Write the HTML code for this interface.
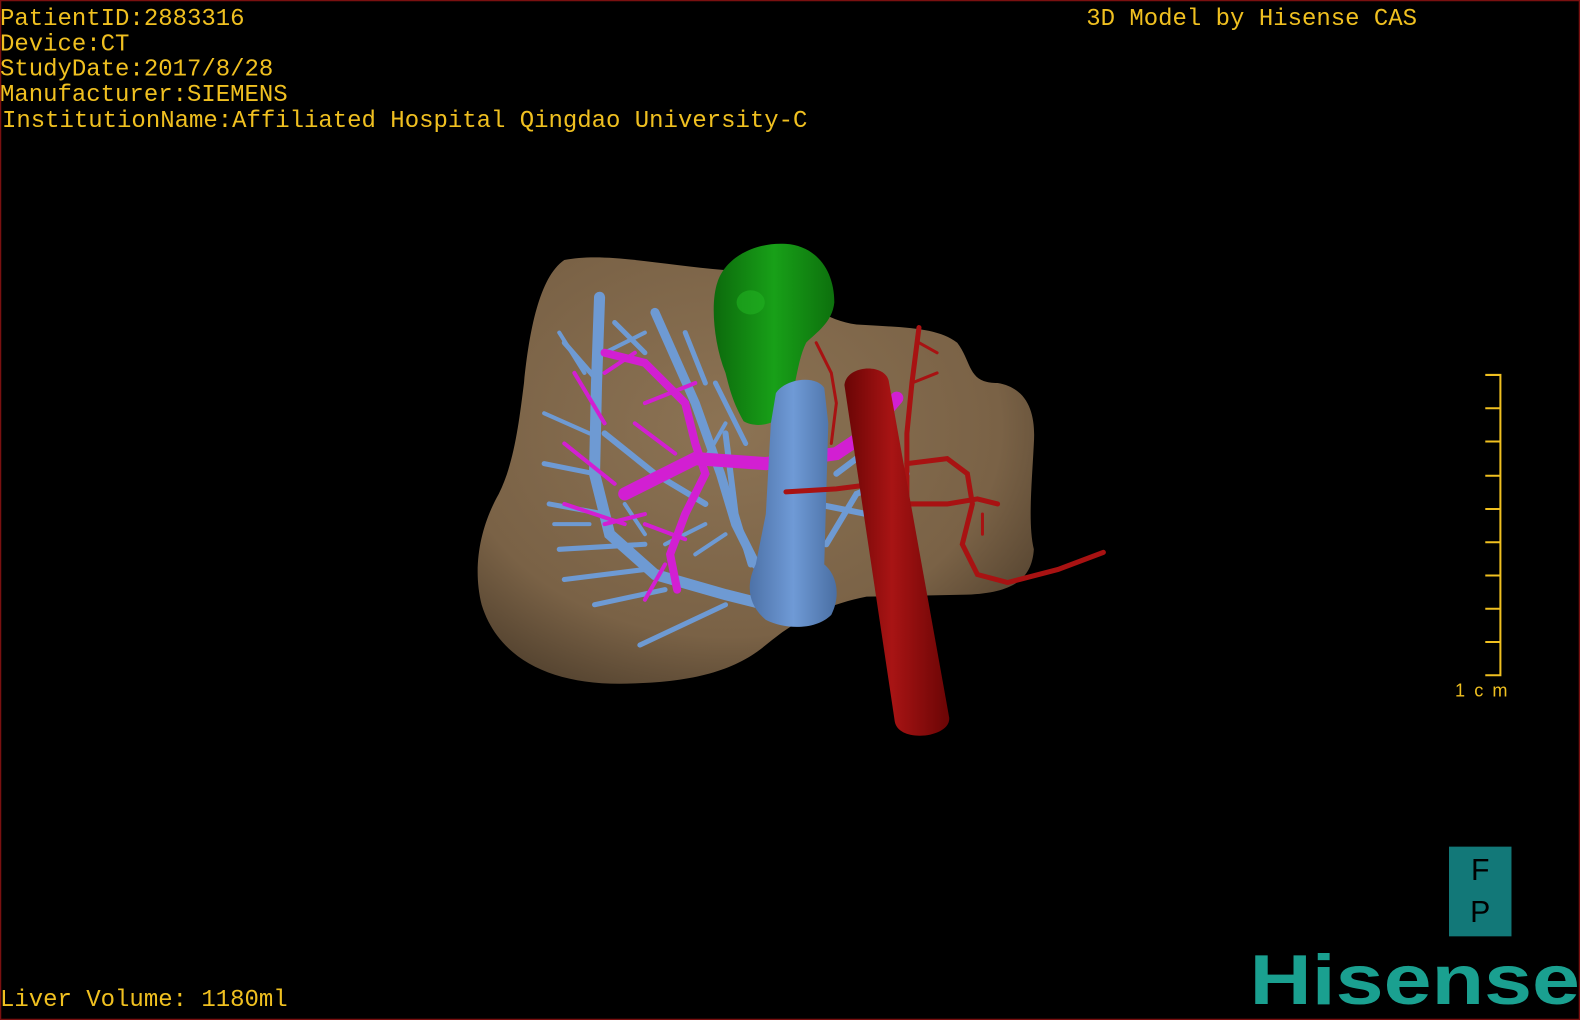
<!DOCTYPE html>
<html><head><meta charset="utf-8"><style>
html,body{margin:0;padding:0;background:#000;width:1580px;height:1020px;overflow:hidden}
svg{display:block}
</style></head><body>
<svg width="1580" height="1020" viewBox="0 0 1568 1012" preserveAspectRatio="none" xmlns="http://www.w3.org/2000/svg">
<defs>
<radialGradient id="lv" cx="0.45" cy="0.4" r="0.7">
<stop offset="0" stop-color="#8c7354"/><stop offset="0.7" stop-color="#7a6246"/><stop offset="1" stop-color="#4e3e2c"/>
</radialGradient>
<linearGradient id="gb" x1="0" y1="0" x2="1" y2="0"><stop offset="0" stop-color="#0c6a0c"/><stop offset="0.5" stop-color="#18a018"/><stop offset="1" stop-color="#0d700d"/></linearGradient>
<linearGradient id="ivc" x1="0" y1="0" x2="1" y2="0"><stop offset="0" stop-color="#4d72a8"/><stop offset="0.5" stop-color="#6f9ad6"/><stop offset="1" stop-color="#4a6fa3"/></linearGradient>
<linearGradient id="ao" x1="0" y1="0" x2="1" y2="0"><stop offset="0" stop-color="#6a0505"/><stop offset="0.45" stop-color="#a81414"/><stop offset="1" stop-color="#6a0505"/></linearGradient>
</defs>
<rect x="0.5" y="0.5" width="1567" height="1011" fill="#000" stroke="#7a1010" stroke-width="1.5"/>
<path d="M560,258 C600,250 650,262 720,268 L760,280 C800,300 820,318 850,322 C900,325 930,325 950,340 C965,360 960,380 990,380 C1020,385 1028,410 1026,440 C1024,480 1020,520 1026,545 C1024,575 1005,588 960,590 L860,592 C820,600 790,615 760,640 C730,665 690,676 630,678 C550,682 495,655 478,600 C468,560 478,520 495,490 C510,460 515,420 520,380 C525,330 535,275 560,258 Z" fill="url(#lv)"/>
<g stroke="#6e9ad3" fill="none" stroke-linecap="round">
<path d="M595,295 L592,380 L590,470 L605,530 L650,570 L720,590 L760,600" stroke-width="11"/>
<path d="M650,310 L690,400 L715,470 L730,520 L750,560" stroke-width="9"/>
<path d="M600,430 L650,470 L700,500" stroke-width="6"/>
<path d="M720,430 L730,510 L745,560" stroke-width="6"/>
<path d="M540,460 L590,470 M545,500 L600,510 M555,545 L640,540 M560,575 L640,565 M590,600 L660,585 M635,640 L720,600 M560,340 L595,380 M610,320 L640,350 M680,330 L700,380 M710,380 L740,440" stroke-width="5"/>
<path d="M820,540 L850,490 L900,470 M810,500 L860,510 M830,470 L870,440" stroke-width="6"/>
<path d="M555,330 L580,370 M540,410 L585,430 M600,350 L640,330 M550,520 L585,520 M620,500 L640,530 M660,540 L700,520 M690,550 L720,530 M700,455 L720,420" stroke-width="4"/>
</g>
<g stroke="#d21fd2" fill="none" stroke-linecap="round">
<path d="M600,350 L640,360 L680,400 L690,440 L700,470 L680,510 L665,550 L672,585" stroke-width="8"/>
<path d="M620,490 L690,455 L760,460 L830,450 L860,430 L890,395" stroke-width="13"/>
<path d="M570,370 L600,420 M560,440 L610,480 M560,500 L620,520 M600,520 L640,510 M640,520 L680,535 M640,400 L690,380 M600,370 L630,350 M630,420 L670,450 M640,595 L660,560" stroke-width="4"/>
</g>
<path d="M712,280 C720,255 750,240 780,242 C810,244 828,268 828,300 C826,320 810,330 800,340 C790,360 790,390 780,408 C770,422 750,425 738,418 C728,400 725,390 720,370 C708,340 705,300 712,280 Z" fill="url(#gb)"/>
<ellipse cx="745" cy="300" rx="14" ry="12" fill="#22b022" opacity="0.6"/>
<path d="M770,390 C780,375 810,372 818,385 L822,420 L818,560 C830,570 835,590 825,610 C810,625 780,625 760,615 C742,600 740,580 750,560 L760,510 L765,420 Z" fill="url(#ivc)"/>
<g stroke="#a81212" fill="none" stroke-linecap="round">
<path d="M780,488 L830,485 L870,480" stroke-width="5"/>
<path d="M810,340 L825,370 L830,400 L825,440" stroke-width="3"/>
<path d="M912,325 L905,380 L900,430 L900,500 L940,500 L970,495 L990,500" stroke-width="5"/>
<path d="M900,460 L940,455 L960,470 L965,500 L955,540 L970,570 L1000,578 L1050,565 L1095,548" stroke-width="5"/>
<path d="M912,340 L930,350 M905,380 L930,370 M975,510 L975,530" stroke-width="3"/>
</g>
<path d="M838,382 C840,362 878,360 882,378 L942,712 C944,732 892,738 888,716 Z" fill="url(#ao)"/>
<g font-family="'Liberation Mono', monospace" font-size="23.8" fill="#f0c020">
<text x="0" y="25">PatientID:2883316</text>
<text x="0" y="50">Device:CT</text>
<text x="0" y="75">StudyDate:2017/8/28</text>
<text x="0" y="100">Manufacturer:SIEMENS</text>
<text x="2" y="126">InstitutionName:Affiliated Hospital Qingdao University-C</text>
<text x="1078" y="25">3D Model by Hisense CAS</text>
<text x="0" y="998">Liver Volume: 1180ml</text>
</g>
<g stroke="#f0c020" stroke-width="2" fill="none">
<path d="M1474,372 H1489 V670 H1474"/>
<path d="M1474,405H1489M1474,438H1489M1474,472H1489M1474,505H1489M1474,538H1489M1474,571H1489M1474,604H1489M1474,637H1489"/>
</g>
<text x="1444" y="691" font-family="'Liberation Sans', sans-serif" font-size="18" fill="#f0c020" textLength="52">1cm</text>
<rect x="1438" y="840" width="62" height="89" fill="#127878"/>
<text x="1469" y="873" text-anchor="middle" font-family="'Liberation Sans', sans-serif" font-size="30" fill="#000">F</text>
<text x="1469" y="915" text-anchor="middle" font-family="'Liberation Sans', sans-serif" font-size="30" fill="#000">P</text>
<text x="1240" y="996" font-family="'Liberation Sans', sans-serif" font-weight="bold" font-size="70" fill="#1aa090" textLength="328" lengthAdjust="spacingAndGlyphs">Hisense</text>
</svg>
</body></html>
